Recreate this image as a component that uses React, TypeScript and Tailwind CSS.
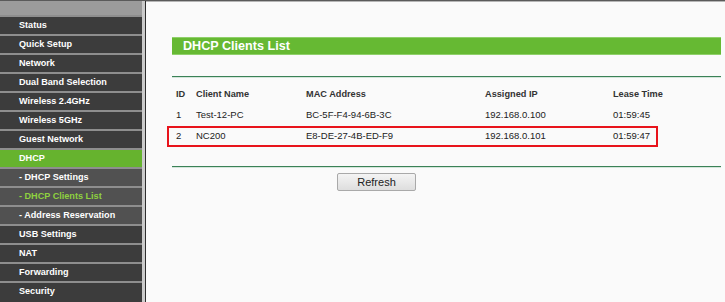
const menu = [
  { label: "Status" },
  { label: "Quick Setup" },
  { label: "Network" },
  { label: "Dual Band Selection" },
  { label: "Wireless 2.4GHz" },
  { label: "Wireless 5GHz" },
  { label: "Guest Network" },
  { label: "DHCP", active: true },
  { label: "- DHCP Settings", sub: true },
  { label: "- DHCP Clients List", sub: true, current: true },
  { label: "- Address Reservation", sub: true },
  { label: "USB Settings" },
  { label: "NAT" },
  { label: "Forwarding" },
  { label: "Security" },
];

const clients = [
  { id: "1", name: "Test-12-PC", mac: "BC-5F-F4-94-6B-3C", ip: "192.168.0.100", lease: "01:59:45" },
  { id: "2", name: "NC200", mac: "E8-DE-27-4B-ED-F9", ip: "192.168.0.101", lease: "01:59:47" },
];

const cols = "grid grid-cols-[20px_110px_179px_128px_1fr] items-center";

export default function App() {
  return (
    <div className="w-[725px] h-[302px] overflow-hidden flex flex-col border-t border-[#5a5a5a] font-['Liberation_Sans',Arial,sans-serif]">
      <div className="flex flex-1 min-h-0">
        <div className="w-[142px] flex flex-col bg-[#3c3c3c]">
          <div className="h-[14px] bg-[#9b9b9b] shrink-0" />
          {menu.map((m) => (
            <div
              key={m.label}
              className={`h-[19px] shrink-0 border-t-2 border-[#8e8e8e] flex items-center pl-[19px] text-[9.1px] font-bold whitespace-nowrap ${
                m.active ? "bg-[#66b32e] text-white" : m.sub ? "bg-[#515151]" : "bg-[#3c3c3c] text-white"
              } ${m.current ? "text-[#8fd13f]" : m.sub ? "text-white" : ""}`}
            >
              {m.label}
            </div>
          ))}
        </div>
        <div className="w-[3px] bg-[#cbcbcb]" />
        <div className="w-px bg-[#2e2e2e]" />
        <div className="flex-1 bg-[#fafafa] border-t border-[#b5b5b5] pl-[26px] pr-[4px] pt-[35px]">
          <div className="h-[18px] bg-[#66b933] border-y border-[#8fd06a] flex items-center pl-[11px] text-white font-bold text-[12.6px]">
            DHCP Clients List
          </div>
          <div className="mt-[21px] h-px bg-[#3b8157]" />
          <div className="h-px bg-[#d3e6da]" />
          <div className="mt-[7px] text-[#222]">
            <div className={`${cols} h-5 pl-1 font-bold text-[9.2px] text-[#333]`}>
              <span>ID</span>
              <span>Client Name</span>
              <span>MAC Address</span>
              <span>Assigned IP</span>
              <span>Lease Time</span>
            </div>
            {clients.map((c) =>
              c.id === "2" ? (
                <div
                  key={c.id}
                  className="mt-px -ml-[5px] w-[491px] h-[21px] border-2 border-[#e8131b] flex items-center"
                >
                  <div className={`${cols} flex-1 pl-[7px] text-[9.5px]`}>
                    <span>{c.id}</span>
                    <span>{c.name}</span>
                    <span>{c.mac}</span>
                    <span>{c.ip}</span>
                    <span>{c.lease}</span>
                  </div>
                </div>
              ) : (
                <div key={c.id} className={`${cols} h-5 pl-1 text-[9.5px]`}>
                  <span>{c.id}</span>
                  <span>{c.name}</span>
                  <span>{c.mac}</span>
                  <span>{c.ip}</span>
                  <span>{c.lease}</span>
                </div>
              )
            )}
          </div>
          <div className="mt-[19px] h-px bg-[#3b8157]" />
          <div className="h-px bg-[#d3e6da]" />
          <button className="mt-[5px] ml-[165px] w-[79px] h-[18px] border border-[#a9a9a9] rounded-[2px] bg-gradient-to-b from-[#f4f4f4] to-[#dedede] text-[11px] text-[#222] leading-none font-['Liberation_Sans',Arial,sans-serif]">
            Refresh
          </button>
        </div>
      </div>
    </div>
  );
}
